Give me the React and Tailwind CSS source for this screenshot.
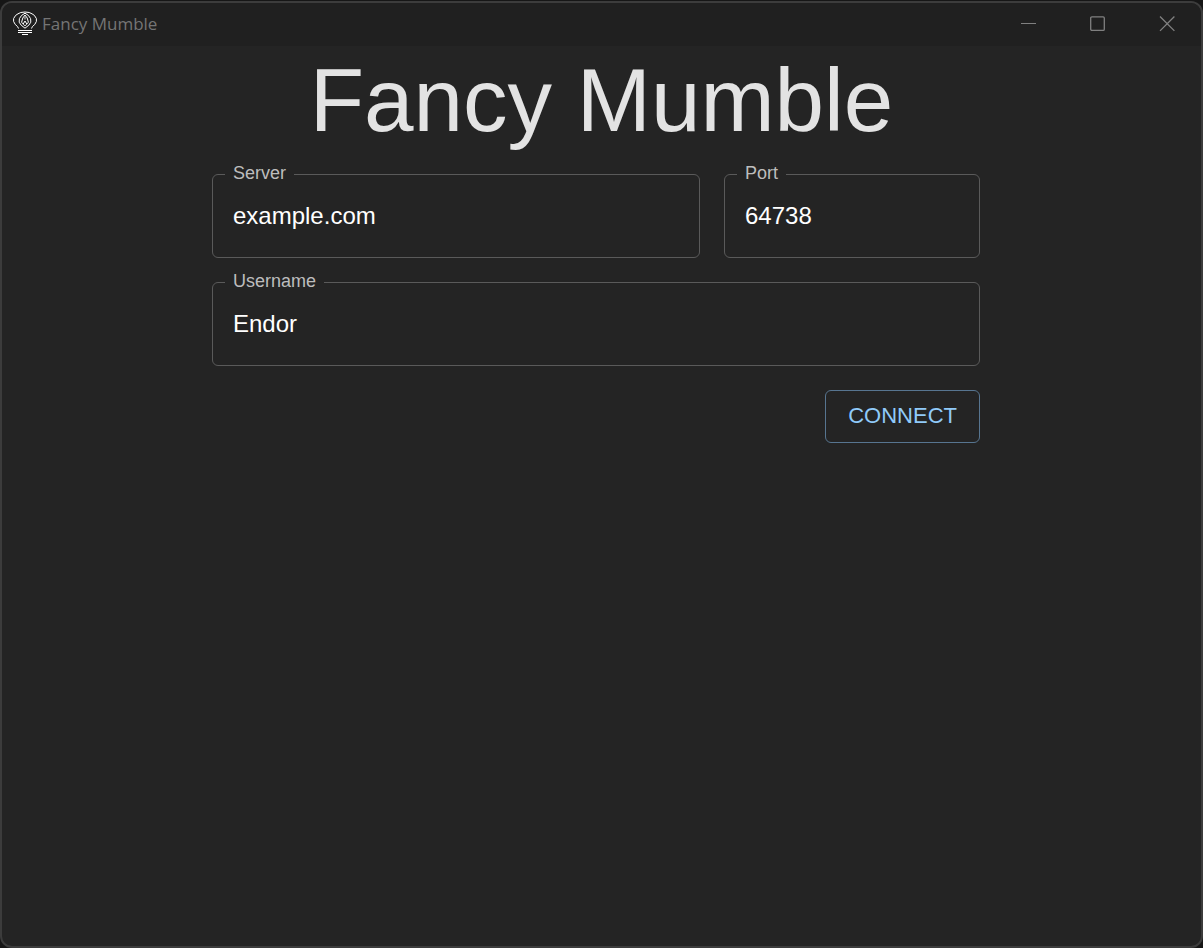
import React from "react";

function Logo() {
  return (
    <svg viewBox="0 0 24 24" className="mb-0.5 size-6 shrink-0" fill="none" stroke="#fff" strokeWidth="1" aria-hidden="true">
      <path d="M5.5 17.5L4.6 15.6L2.2 13.4L0.6 10.4V7.6L2.6 4.4L5 2.8L7.8 1.5L12 1L16.2 1.5L19 2.8L21.4 4.4L23.4 7.6V10.4L21.8 13.4L19.4 15.6L18.5 17.5" />
      <path d="M12 2.2L8.6 4.4L6.4 7.6L6.2 11.2L8.2 14.2L12 17.2L15.8 14.2L17.8 11.2L17.6 7.6L15.4 4.4Z" strokeWidth="1" />
      <path d="M12 4L9.8 7L8.6 11.2L10.2 13L12 10L13.8 13L15.4 11.2L14.2 7Z" strokeWidth="1" />
      <path d="M12 5.5V8.5M10.2 13L12 15L13.8 13" strokeWidth="0.8" />
      <path d="M5 19.5H19M5 21.5H19M9 23.5H15" strokeWidth="1.1" />
    </svg>
  );
}

function TitleBar() {
  const control = "flex h-full w-[69px] items-center justify-center text-[#808080]";
  return (
    <header className="flex h-[43px] items-center justify-between bg-[#202020] pb-0.5 pl-[11px]">
      <div className="flex items-center gap-[5px]">
        <Logo />
        <span className="font-['Open_Sans','Noto_Sans',sans-serif] text-[17px] leading-6 text-[#757575]">Fancy Mumble</span>
      </div>
      <div className="flex h-full">
        <button type="button" aria-label="Minimize" className={control}>
          <svg viewBox="0 0 16 16" className="size-4" stroke="currentColor" fill="none"><path d="M0 7.5H15" /></svg>
        </button>
        <button type="button" aria-label="Maximize" className={control}>
          <svg viewBox="0 0 16 16" className="size-4" stroke="currentColor" fill="none" strokeWidth="1.3"><rect x="0.7" y="0.8" width="13.6" height="13.6" rx="1.2" /></svg>
        </button>
        <button type="button" aria-label="Close" className={control}>
          <svg viewBox="0 0 16 16" className="size-4" stroke="currentColor" fill="none" strokeWidth="1.3"><path d="M1 0.5L15.4 14.9M15.4 0.5L1 14.9" /></svg>
        </button>
      </div>
    </header>
  );
}

function Field({ id, label, value, className = "" }) {
  return (
    <div className={`relative ${className}`}>
      <input
        id={id}
        type="text"
        defaultValue={value}
        className="h-[84px] w-full rounded-md border border-[#5a5a5a] bg-transparent px-5 text-2xl text-white outline-none focus:border-[#90caf9]"
      />
      <label htmlFor={id} className="absolute -top-[13px] left-[13px] bg-[#242424] px-2 text-lg leading-6 text-[#bdbdbd]">
        {label}
      </label>
    </div>
  );
}

export default function App() {
  return (
    <div className="flex min-h-screen flex-col bg-[#161616] pt-px font-['Liberation_Sans',Arial,sans-serif]">
      <div className="flex grow flex-col overflow-hidden rounded-xl border-2 border-[#3c3c3c] bg-[#242424]">
        <TitleBar />
        <main className="mx-auto w-full max-w-[779px]">
          <h1 className="text-center text-[89px] leading-[108px] text-[#e3e3e3]">Fancy Mumble</h1>
          <form className="mt-5 grid grid-cols-[488fr_256fr] gap-6 pr-[11px]" onSubmit={(e) => e.preventDefault()}>
            <Field id="server" label="Server" value="example.com" />
            <Field id="port" label="Port" value="64738" />
            <Field id="username" label="Username" value="Endor" className="col-span-2" />
            <button type="submit" className="col-span-2 h-[53px] justify-self-end rounded-md border border-[#577590] px-[22px] pb-0.5 text-[22px] text-[#90caf9]">
              CONNECT
            </button>
          </form>
        </main>
      </div>
    </div>
  );
}
